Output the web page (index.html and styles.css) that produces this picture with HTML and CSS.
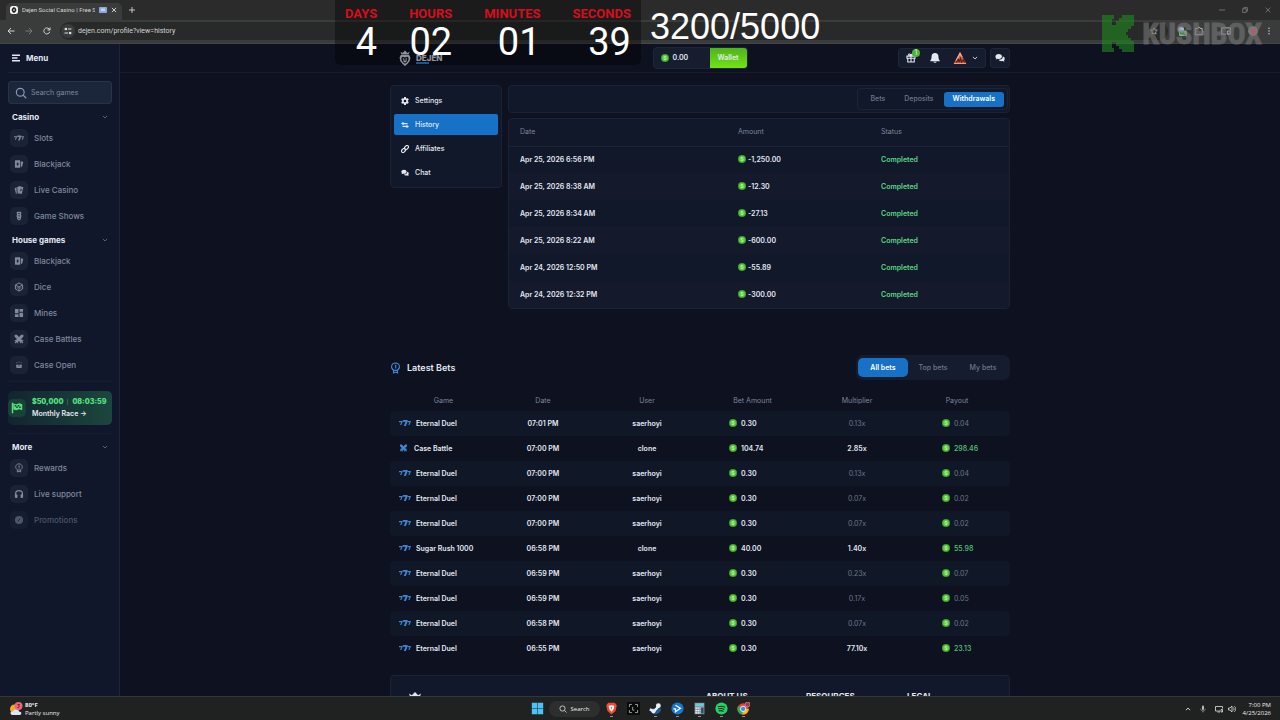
FILE: index.html
```html
<!DOCTYPE html>
<html lang="en">
<head>
<meta charset="utf-8">
<title>Dejen Social Casino</title>
<link rel="stylesheet" href="styles.css">
</head>
<body>
<svg class="sprite" aria-hidden="true">
  <symbol id="i-coin" viewBox="0 0 16 16"><circle cx="8" cy="8" r="8" fill="#3aa526"/><circle cx="8" cy="8" r="5.8" fill="#62cc45"/><path d="M10.400 5.600C9.400 4.600 6 4.500 6 6.400c0 2 4.300 1 4.300 3.100 0 2-3.600 1.900-4.700.8" fill="none" stroke="#e9ffe2" stroke-width="1.300"/></symbol>
  <symbol id="i-777" viewBox="0 0 24 16"><path fill="currentColor" d="M0 4h7v2.200L4.500 12H2.200L4.400 6.300H0zM17.500 4H24l-.6 2.200L21 12h-2.300l2.200-5.700h-3.400zM7.600 2h9.600v3L13.600 14h-4l3.500-8.600H7.600z"/></symbol>
  <symbol id="i-cards" viewBox="0 0 16 16"><path fill="currentColor" fill-rule="evenodd" d="M2.500 2H9a1 1 0 0 1 1 1v10a1 1 0 0 1-1 1H2.500a1 1 0 0 1-1-1V3a1 1 0 0 1 1-1zm3.300 3L4 8l1.800 3L7.600 8z"/><path fill="currentColor" d="M11 3.500l3 .8a1 1 0 0 1 .7 1.200L13 12l-2 .8z"/></symbol>
  <symbol id="i-live" viewBox="0 0 16 16"><path fill="currentColor" d="M1 5l3-1.400L4.500 14 3 13.500zM5 3l5-1.500v11L6 14z"/><path fill="currentColor" fill-rule="evenodd" d="M9.500 2l5.500 1.500-2.600 10.800L7 13zm1.700 3.600L9.600 8l1 2.400L12.600 8z"/></symbol>
  <symbol id="i-shows" viewBox="0 0 16 16"><path fill="currentColor" fill-rule="evenodd" d="M5 1h6l1 2-1 2 1 3-1 3v2l-3 2-3-2v-2L4 8l1-3-1-2zm1.500 2v1.500h3V3zm0 4v1.500h3V7zm0 4v1h3v-1z"/></symbol>
  <symbol id="i-dice" viewBox="0 0 16 16"><g fill="none" stroke="currentColor" stroke-width="1.600" stroke-linejoin="round"><path d="M8 1.500l5.700 3.200v6.600L8 14.500l-5.700-3.200V4.700zM2.300 4.700L8 8l5.700-3.300M8 8v6.500"/></g><circle cx="5" cy="9.500" r="1" fill="currentColor"/><circle cx="11" cy="9.500" r="1" fill="currentColor"/></symbol>
  <symbol id="i-mines" viewBox="0 0 16 16"><path fill="currentColor" d="M1.500 1.500h5.700v7H1.500zM8.800 1.500h5.700v4.500H8.800zM1.500 10h5.700v4.500H1.500zM8.800 7.500h5.700v7H8.800z"/></symbol>
  <symbol id="i-swords" viewBox="0 0 16 16"><path fill="currentColor" d="M1 1h3.500L8 4.700 11.500 1H15v3.500L11.300 8l2 2 1-1 1 1-2 2L15 13.500 13.500 15 12 13.300l-2 2-1-1 1-1-2-2-2 2 1 1-1 1-2-2L2.500 15 1 13.500 2.700 12l-2-2 1-1 1 1 2-2L1 4.500z"/></symbol>
  <symbol id="i-case" viewBox="0 0 16 16"><path fill="currentColor" d="M2 7.500h12l-1 6.500H3zM7.300 1h1.400v2.500H7.300zM3 2.500l2 1.500-.8 1-2-1.500zM13 2.500L11 4l.8 1 2-1.500z"/><path d="M6.500 10h3" stroke="#20283c" stroke-width="1.500"/></symbol>
  <symbol id="i-reward" viewBox="0 0 16 18"><g fill="none" stroke="currentColor" stroke-width="1.700"><path d="M5.500 12.500C.5 10 .8 2 8 1.500c7.200.5 7.500 8.500 2.500 11z"/><path d="M5 12.500v3.700l3-1.200 3 1.200v-3.700M7 5.800L8.300 5v4.800"/></g></symbol>
  <symbol id="i-headset" viewBox="0 0 16 16"><path d="M2.500 10V8a5.500 5.500 0 0 1 11 0v2" fill="none" stroke="currentColor" stroke-width="2"/><rect x="1.500" y="8.500" width="4" height="6" rx="1.300" fill="currentColor"/><rect x="10.500" y="8.500" width="4" height="6" rx="1.300" fill="currentColor"/></symbol>
  <symbol id="i-promo" viewBox="0 0 16 16"><circle cx="8" cy="8" r="6.500" fill="currentColor"/><path d="M6 10l4-4" stroke="#1a2236" stroke-width="1.200"/></symbol>
  <symbol id="i-chat" viewBox="0 0 16 16"><path fill="currentColor" d="M6 1.500c3 0 5.200 1.700 5.200 4S9 9.600 6 9.600c-.7 0-1.300 0-1.900-.3L1 10.500l1-2.300A3.700 3.700 0 0 1 .6 5.500c0-2.300 2.400-4 5.400-4z"/><path fill="currentColor" d="M12.600 5.600c1.800.6 3 1.900 3 3.500 0 1-.5 1.900-1.300 2.600l1 2.300-3.100-1.100c-3 .7-5.600-.3-6.600-2 3.800.3 7-1.800 7-5.300z"/></symbol>
  <symbol id="i-down" viewBox="0 0 10 10"><path d="M1.500 3.200L5 6.700l3.500-3.500" fill="none" stroke="currentColor" stroke-width="1.400"/></symbol>
  <symbol id="i-search" viewBox="0 0 16 16"><circle cx="7" cy="7" r="5.200" fill="none" stroke="currentColor" stroke-width="1.500"/><path d="M11 11l4 4" stroke="currentColor" stroke-width="1.500"/></symbol>
  <symbol id="i-lion" viewBox="0 0 20 26"><path fill="#dfe4f2" d="M4 7L2.500 2.500 6 4.500l4-4 4 4 3.500-2L16 7z"/><path fill="#dfe4f2" fill-rule="evenodd" d="M3 8h14l2 4-1 6-4 5-4 3-4-3-4-5-1-6zm3 3l-2 2 .5 4L7 20.500l3 2 3-2 2.500-3.500.5-4-2-2-4 1zm0 2.500l3 .5v3l1 .8 1-.8v-3l3-.5-1.500 2.500.5 2.500-3 2.500-3-2.500.5-2.500z"/></symbol>
</svg>

<div class="desktop">
  <header class="browser">
    <div class="tabs">
      <div class="tab">
        <svg class="favicon" viewBox="0 0 16 16"><rect width="16" height="16" rx="5" fill="#f4f4f4"/><path fill="#222" fill-rule="evenodd" d="M8 2l3 2 2 4-2 4-3 2-3-2-2-4 2-4zm-2 5v3h1V8h2v2h1V7z"/></svg>
        <span class="tab-title">Dejen Social Casino | Free S</span>
        <svg class="ic8" viewBox="0 0 16 12"><rect width="16" height="12" rx="1.500" fill="#8fa5dd"/><rect x="4" y="3" width="8" height="5" fill="#c6d2f4"/></svg>
        <button class="chrome-btn" aria-label="Close tab"><svg class="ic6" viewBox="0 0 10 10"><path d="M1.500 1.500l7 7m0-7l-7 7" stroke="currentColor" stroke-width="1.600"/></svg></button>
      </div>
      <button class="chrome-btn new-tab" aria-label="New tab"><svg class="ic6" viewBox="0 0 10 10"><path d="M5 0v10M0 5h10" stroke="currentColor" stroke-width="1.500"/></svg></button>
      <div class="window-btns">
        <button class="chrome-btn" aria-label="Minimize"><svg class="ic6" viewBox="0 0 10 10"><path d="M0 5h10" stroke="currentColor"/></svg></button>
        <button class="chrome-btn" aria-label="Restore"><svg class="ic6" viewBox="0 0 10 10"><path d="M1 3h6v6H1zM3 3V1h6v6H7" fill="none" stroke="currentColor"/></svg></button>
        <button class="chrome-btn" aria-label="Close"><svg class="ic6" viewBox="0 0 10 10"><path d="M1 1l8 8m0-8L1 9" stroke="currentColor"/></svg></button>
      </div>
    </div>
    <div class="toolbar">
      <div class="nav-btns">
        <button class="chrome-btn" aria-label="Back"><svg class="ic8" viewBox="0 0 16 16"><path d="M15 8H2m6-6L2 8l6 6" fill="none" stroke="currentColor" stroke-width="2"/></svg></button>
        <button class="chrome-btn dim" aria-label="Forward"><svg class="ic8" viewBox="0 0 16 16"><path d="M1 8h13M8 2l6 6-6 6" fill="none" stroke="currentColor" stroke-width="2"/></svg></button>
        <button class="chrome-btn" aria-label="Reload"><svg class="ic8" viewBox="0 0 16 16"><path d="M13.500 9.500A6 6 0 1 1 12 3.700L14 6M14 1v5H9" fill="none" stroke="currentColor" stroke-width="2"/></svg></button>
      </div>
      <div class="address">
        <span class="site-info"><svg class="ic8" viewBox="0 0 16 16"><path d="M1 4h5M8 4h7M1 12h7M10 12h5" stroke="#ddd" stroke-width="2"/><circle cx="4" cy="4" r="2.500" fill="#ddd"/><circle cx="12" cy="12" r="2.500" fill="#ddd"/></svg></span>
        <input class="url" aria-label="Address" value="dejen.com/profile?view=history">
        <svg class="ic8" viewBox="0 0 16 16"><path d="M8 1.500l2 4.400 4.700.5-3.500 3.200 1 4.700L8 12l-4.200 2.300 1-4.700L1.300 6.400 6 5.900z" fill="none" stroke="#bbb" stroke-width="1.500"/></svg>
      </div>
      <div class="extensions">
        <svg class="ic10" viewBox="0 0 20 20"><circle cx="8" cy="7" r="6" fill="#a9b9ef"/><circle cx="8" cy="6" r="3" fill="#fff"/><rect x="4" y="9" width="16" height="11" rx="3" fill="#6fd27d"/><path d="M7 17v-4l3 4v-4m3 0v4h4" fill="none" stroke="#20592b" stroke-width="1.500"/></svg>
        <svg class="ic10" viewBox="0 0 16 16"><path d="M2 4h4c0-3 4-3 4 0h3v4c2 0 2 3 0 3v3H2v-4c2 0 2-2.500 0-2.500z" fill="none" stroke="#bbb" stroke-width="1.500"/></svg>
        <svg class="ic10 gap" viewBox="0 0 16 16"><path d="M8 13H1V3h14v4" fill="none" stroke="#bbb" stroke-width="1.500"/><path d="M10 8h5v5h-5zM11 14l3-3" fill="none" stroke="#bbb" stroke-width="1.500"/></svg>
        <svg class="ic10 gap" viewBox="0 0 20 20"><circle cx="10" cy="10" r="8.500" fill="#e3476b" stroke="#46a08a" stroke-width="2.500"/></svg>
        <svg class="ic8" viewBox="0 0 16 16"><g fill="#ccc"><circle cx="8" cy="2.500" r="1.500"/><circle cx="8" cy="8" r="1.500"/><circle cx="8" cy="13.500" r="1.500"/></g></svg>
      </div>
    </div>
  </header>

  <div class="app">
    <aside class="sidebar">
      <button class="menu-btn"><svg class="burger" viewBox="0 0 16 16"><path d="M0 2.500h16M0 8h11M0 13.500h16" stroke="currentColor" stroke-width="2.600"/></svg>Menu</button>
      <label class="search"><svg class="ic12"><use href="#i-search"/></svg><input type="search" placeholder="Search games" aria-label="Search games"></label>
      <nav class="group">
        <button class="group-title">Casino<svg class="ic6"><use href="#i-down"/></svg></button>
        <a class="side-link" href="#"><span class="tile"><svg class="ic10"><use href="#i-777"/></svg></span>Slots</a>
        <a class="side-link" href="#"><span class="tile"><svg class="ic10"><use href="#i-cards"/></svg></span>Blackjack</a>
        <a class="side-link" href="#"><span class="tile"><svg class="ic10"><use href="#i-live"/></svg></span>Live Casino</a>
        <a class="side-link" href="#"><span class="tile"><svg class="ic10"><use href="#i-shows"/></svg></span>Game Shows</a>
      </nav>
      <nav class="group">
        <button class="group-title">House games<svg class="ic6"><use href="#i-down"/></svg></button>
        <a class="side-link" href="#"><span class="tile"><svg class="ic10"><use href="#i-cards"/></svg></span>Blackjack</a>
        <a class="side-link" href="#"><span class="tile"><svg class="ic10"><use href="#i-dice"/></svg></span>Dice</a>
        <a class="side-link" href="#"><span class="tile"><svg class="ic10"><use href="#i-mines"/></svg></span>Mines</a>
        <a class="side-link" href="#"><span class="tile"><svg class="ic10"><use href="#i-swords"/></svg></span>Case Battles</a>
        <a class="side-link" href="#"><span class="tile"><svg class="ic8"><use href="#i-case"/></svg></span>Case Open</a>
      </nav>
      <div class="race-wrap">
        <a class="race" href="#">
          <span class="tile flag"><svg class="ic12" viewBox="0 0 16 16"><path d="M2 1v14" stroke="#4fe07a" stroke-width="2"/><path fill="#4fe07a" fill-rule="evenodd" d="M3 2l4 1 4-1.500L15 3v8l-4-1.500L7 11l-4-1zm2 2v2h2V4zm4 0v2h2V4zM7 6v2h2V6zm4 0v2h2V6z"/></svg></span>
          <span class="race-text"><span class="race-top"><b>$50,000</b><i></i><b>08:03:59</b></span><span>Monthly Race →</span></span>
        </a>
      </div>
      <nav class="group">
        <button class="group-title">More<svg class="ic6"><use href="#i-down"/></svg></button>
        <a class="side-link" href="#"><span class="tile"><svg class="ic10"><use href="#i-reward"/></svg></span>Rewards</a>
        <a class="side-link" href="#"><span class="tile"><svg class="ic10"><use href="#i-headset"/></svg></span>Live support</a>
        <a class="side-link faded" href="#"><span class="tile"><svg class="ic10"><use href="#i-promo"/></svg></span>Promotions</a>
      </nav>
    </aside>

    <main class="main">
      <div class="topbar">
        <div class="container topbar-grid">
          <a class="logo" href="#"><svg class="lion"><use href="#i-lion"/></svg><span class="logo-name">DEJEN</span></a>
          <div class="wallet"><span class="balance"><svg class="ic8"><use href="#i-coin"/></svg>0.00</span><button class="wallet-btn">Wallet</button></div>
          <div class="actions">
            <div class="action-box">
              <button class="icon-btn" aria-label="Gifts"><svg class="ic10" viewBox="0 0 16 16"><path d="M1.500 5h13v3.500h-13zM2.800 8.500v6h10.400v-6M8 5v9.500M8 5C3 5 3.500 1 6 1.500 7.500 2 8 5 8 5s.5-3 2-3.500C12.500 1 13 5 8 5" fill="none" stroke="currentColor" stroke-width="1.700"/></svg><span class="badge">1</span></button>
              <button class="icon-btn" aria-label="Notifications"><svg class="bell" viewBox="0 0 16 18"><path fill="currentColor" d="M8 1c3.500 0 5.500 2.500 5.500 5.500 0 3 .5 4.500 2 6.500v1H.5v-1c1.500-2 2-3.500 2-6.500C2.500 3.500 4.500 1 8 1zM5.500 15h5c-.3 2-4.700 2-5 0z"/></svg></button>
              <button class="icon-btn" aria-label="Account"><svg class="avatar" viewBox="0 0 28 26"><path d="M14 0l14 26H0z" fill="#d9583a"/><path d="M14 0l6 11-4-1-2-4-6 12-4 1z" fill="#f3b08c"/><path d="M6 23l4-7 2 5 3-7 2 8 4-5 3 6" fill="none" stroke="#4b1d20" stroke-width="2.500"/><path d="M1 25h26" stroke="#f2c3a5" stroke-width="1.500"/></svg><svg class="ic6"><use href="#i-down"/></svg></button>
            </div>
            <button class="chat-btn" aria-label="Open chat"><svg class="ic10"><use href="#i-chat"/></svg></button>
          </div>
        </div>
      </div>

      <div class="container content">
        <section class="profile">
          <nav class="card profile-nav">
            <a href="#"><svg class="ic8" viewBox="0 0 16 16"><path fill="currentColor" fill-rule="evenodd" d="M6.300 0h3.400l.5 2.300 1.400.8 2.300-.8 1.700 3-1.700 1.600v2.200l1.700 1.600-1.700 3-2.300-.8-1.400.8-.5 2.300H6.300l-.5-2.300-1.400-.8-2.300.8-1.700-3 1.700-1.600V6.900L.4 5.300l1.700-3 2.300.8 1.400-.8zM8 5.300a2.700 2.700 0 1 0 0 5.400 2.700 2.700 0 0 0 0-5.400z"/></svg>Settings</a>
            <a class="active" href="#"><svg class="ic8" viewBox="0 0 16 16"><path fill="currentColor" d="M5 1.500V4h8v2.400H5V8.500L0 5zM11 14.500V12H3V9.600h8V7.500l5 3.500z"/></svg>History</a>
            <a href="#"><svg class="ic8" viewBox="0 0 16 16"><g fill="none" stroke="currentColor" stroke-width="2.300"><rect x="6.500" y="2" width="9" height="6" rx="3" transform="rotate(-45 11 5)"/><rect x=".5" y="8" width="9" height="6" rx="3" transform="rotate(-45 5 11)"/></g></svg>Affiliates</a>
            <a href="#"><svg class="ic8"><use href="#i-chat"/></svg>Chat</a>
          </nav>
          <div class="profile-main">
            <div class="card filter-bar">
              <div class="segmented"><button>Bets</button><button>Deposits</button><button class="active">Withdrawals</button></div>
            </div>
            <div class="card">
              <table class="history">
                <colgroup><col class="h-date"><col class="h-amount"><col></colgroup>
                <thead><tr><th>Date</th><th>Amount</th><th>Status</th></tr></thead>
                <tbody>
                  <tr><td>Apr 25, 2026 6:56 PM</td><td><svg class="coin"><use href="#i-coin"/></svg>-1,250.00</td><td>Completed</td></tr>
                  <tr><td>Apr 25, 2026 8:38 AM</td><td><svg class="coin"><use href="#i-coin"/></svg>-12.30</td><td>Completed</td></tr>
                  <tr><td>Apr 25, 2026 8:34 AM</td><td><svg class="coin"><use href="#i-coin"/></svg>-27.13</td><td>Completed</td></tr>
                  <tr><td>Apr 25, 2026 8:22 AM</td><td><svg class="coin"><use href="#i-coin"/></svg>-600.00</td><td>Completed</td></tr>
                  <tr><td>Apr 24, 2026 12:50 PM</td><td><svg class="coin"><use href="#i-coin"/></svg>-55.89</td><td>Completed</td></tr>
                  <tr><td>Apr 24, 2026 12:32 PM</td><td><svg class="coin"><use href="#i-coin"/></svg>-300.00</td><td>Completed</td></tr>
                </tbody>
              </table>
            </div>
          </div>
        </section>

        <section class="bets">
          <div class="bets-head">
            <h2><svg class="medal"><use href="#i-reward"/></svg>Latest Bets</h2>
            <div class="segmented large"><button class="active">All bets</button><button>Top bets</button><button>My bets</button></div>
          </div>
          <table class="bet-table">
            <colgroup><col class="b-game"><col class="b-date"><col class="b-user"><col class="b-bet"><col class="b-mult"><col></colgroup>
            <thead><tr><th>Game</th><th>Date</th><th>User</th><th>Bet Amount</th><th>Multiplier</th><th>Payout</th></tr></thead>
            <tbody>
              <tr><td><svg class="slot"><use href="#i-777"/></svg>Eternal Duel</td><td>07:01 PM</td><td>saerhoyi</td><td><svg class="coin"><use href="#i-coin"/></svg>0.30</td><td>0.13x</td><td><svg class="coin"><use href="#i-coin"/></svg>0.04</td></tr>
              <tr class="win"><td><svg class="battle"><use href="#i-swords"/></svg>Case Battle</td><td>07:00 PM</td><td>clone</td><td><svg class="coin"><use href="#i-coin"/></svg>104.74</td><td>2.85x</td><td><svg class="coin"><use href="#i-coin"/></svg>298.46</td></tr>
              <tr><td><svg class="slot"><use href="#i-777"/></svg>Eternal Duel</td><td>07:00 PM</td><td>saerhoyi</td><td><svg class="coin"><use href="#i-coin"/></svg>0.30</td><td>0.13x</td><td><svg class="coin"><use href="#i-coin"/></svg>0.04</td></tr>
              <tr><td><svg class="slot"><use href="#i-777"/></svg>Eternal Duel</td><td>07:00 PM</td><td>saerhoyi</td><td><svg class="coin"><use href="#i-coin"/></svg>0.30</td><td>0.07x</td><td><svg class="coin"><use href="#i-coin"/></svg>0.02</td></tr>
              <tr><td><svg class="slot"><use href="#i-777"/></svg>Eternal Duel</td><td>07:00 PM</td><td>saerhoyi</td><td><svg class="coin"><use href="#i-coin"/></svg>0.30</td><td>0.07x</td><td><svg class="coin"><use href="#i-coin"/></svg>0.02</td></tr>
              <tr class="win"><td><svg class="slot"><use href="#i-777"/></svg>Sugar Rush 1000</td><td>06:58 PM</td><td>clone</td><td><svg class="coin"><use href="#i-coin"/></svg>40.00</td><td>1.40x</td><td><svg class="coin"><use href="#i-coin"/></svg>55.98</td></tr>
              <tr><td><svg class="slot"><use href="#i-777"/></svg>Eternal Duel</td><td>06:59 PM</td><td>saerhoyi</td><td><svg class="coin"><use href="#i-coin"/></svg>0.30</td><td>0.23x</td><td><svg class="coin"><use href="#i-coin"/></svg>0.07</td></tr>
              <tr><td><svg class="slot"><use href="#i-777"/></svg>Eternal Duel</td><td>06:59 PM</td><td>saerhoyi</td><td><svg class="coin"><use href="#i-coin"/></svg>0.30</td><td>0.17x</td><td><svg class="coin"><use href="#i-coin"/></svg>0.05</td></tr>
              <tr><td><svg class="slot"><use href="#i-777"/></svg>Eternal Duel</td><td>06:58 PM</td><td>saerhoyi</td><td><svg class="coin"><use href="#i-coin"/></svg>0.30</td><td>0.07x</td><td><svg class="coin"><use href="#i-coin"/></svg>0.02</td></tr>
              <tr class="win"><td><svg class="slot"><use href="#i-777"/></svg>Eternal Duel</td><td>06:55 PM</td><td>saerhoyi</td><td><svg class="coin"><use href="#i-coin"/></svg>0.30</td><td>77.10x</td><td><svg class="coin"><use href="#i-coin"/></svg>23.13</td></tr>
            </tbody>
          </table>
        </section>

        <footer class="card site-footer">
          <svg class="footer-lion"><use href="#i-lion"/></svg>
          <span>ABOUT US</span><span>RESOURCES</span><span>LEGAL</span>
        </footer>
      </div>
    </main>
  </div>

  <footer class="taskbar">
    <div class="weather">
      <svg class="sun" viewBox="0 0 28 28"><circle cx="11" cy="14" r="9" fill="#f5a62b"/><path d="M7 26c-6-1-5-8 1-7 2-6 11-5 12 0 6 0 6 7 1 7z" fill="#d8e8fb"/><circle cx="19" cy="8" r="8" fill="#ee6478"/><path d="M17 5h4l-2 3c3 0 2 4-2 3" fill="none" stroke="#5d1522" stroke-width="1.500"/></svg>
      <div><b>80°F</b><span>Partly sunny</span></div>
    </div>
    <div class="dock">
      <svg class="dock-icon" viewBox="0 0 16 16"><path fill="#4cc3f5" d="M1 1h6.700v6.700H1zM8.300 1H15v6.700H8.300zM1 8.300h6.700V15H1zM8.300 8.300H15V15H8.300z"/></svg>
      <button class="task-search"><svg class="ic8"><use href="#i-search"/></svg>Search</button>
      <svg class="dock-icon running" viewBox="0 0 16 16"><path fill="#f04a32" d="M4 1h8l2.500 3-1.500 7-5 4.500L3 11 1.500 4z"/><path fill="#fff" d="M4.500 4.500L8 4l3.500.5-.8 4L8 12 5.300 8.500z"/><path fill="#f04a32" d="M7 6h2l-1 3.500z"/></svg>
      <svg class="dock-icon" viewBox="0 0 16 16"><rect width="16" height="16" fill="#0a0a0a"/><path d="M3 6V3h3M10 3h3v3M13 10v3h-3M6 13H3v-3M7 6v4h2" fill="none" stroke="#bbb"/></svg>
      <svg class="dock-icon running" viewBox="0 0 16 16"><path d="M1 8a7 7 0 0 0 14 0z" fill="#1c5b93"/><path d="M1 9l5 2.500L12 5" fill="none" stroke="#e8eef5" stroke-width="3"/><circle cx="11.500" cy="4.500" r="3" fill="#e8eef5"/><circle cx="5.500" cy="11.500" r="2.500" fill="#e8eef5"/></svg>
      <svg class="dock-icon running" viewBox="0 0 16 16"><circle cx="8" cy="8" r="7.500" fill="#1777d2"/><path d="M5.500 4l6 3.700-6 4.300V8.500H3" fill="none" stroke="#fff" stroke-width="1.600"/></svg>
      <svg class="dock-icon running" viewBox="0 0 16 16"><rect x="2" y="1" width="12" height="14" fill="#8c9ba8"/><rect x="3" y="2" width="10" height="3" fill="#62d0dc"/><path d="M3 7.500h6M3 10.500h6M3 13.500h6" stroke="#eee" stroke-width="1.500" stroke-dasharray="2 .7"/><rect x="10" y="7" width="3" height="7" fill="#24506b"/></svg>
      <svg class="dock-icon running" viewBox="0 0 16 16"><circle cx="8" cy="8" r="7.500" fill="#25d366"/><path d="M3.500 5.800c3-1 6.500-.7 9 .8M4 8.400c2.600-.8 5.300-.5 7.500.8M4.500 11c2-.6 4.200-.4 6 .6" fill="none" stroke="#10321c" stroke-width="1.300"/></svg>
      <svg class="dock-icon running" viewBox="0 0 16 16"><circle cx="7.500" cy="8.500" r="7" fill="#e94335"/><path d="M1.400 5l6.100 3.500L6.500 15.400A7 7 0 0 1 1.400 5z" fill="#34a853"/><path d="M7.500 8.500h7a7 7 0 0 1-8 6.900z" fill="#fbbc05"/><circle cx="7.500" cy="8.500" r="3.300" fill="#4285f4" stroke="#fff"/><circle cx="13" cy="3" r="3" fill="#d02245" stroke="#72b8a8"/></svg>
    </div>
    <div class="tray">
      <svg class="ic6" viewBox="0 0 10 10"><path d="M1.500 7L5 3.500 8.500 7" fill="none" stroke="currentColor" stroke-width="1.500"/></svg>
      <svg class="ic8 gap" viewBox="0 0 16 16"><rect x="6" y="1" width="4" height="9" rx="2" fill="#bbb"/><path d="M3.500 7.500c0 6 9 6 9 0M8 12v3" fill="none" stroke="#bbb" stroke-width="1.200"/></svg>
      <svg class="ic8 gap" viewBox="0 0 16 16"><path d="M10 12H1V3h14v4M5 14h5M12 9v5h3V9z" fill="none" stroke="currentColor" stroke-width="1.500"/></svg>
      <svg class="ic8" viewBox="0 0 16 16"><path d="M1 6h3l4-4v12l-4-4H1zM10.500 5c2 1.500 2 4.500 0 6M12.500 2.500c4 3 4 8 0 11" fill="none" stroke="currentColor" stroke-width="1.500"/></svg>
      <div class="clock"><span>7:00 PM</span><span>4/25/2026</span></div>
    </div>
  </footer>

  <div class="countdown">
    <div><span>DAYS</span><strong>4</strong></div>
    <div><span>HOURS</span><strong>02</strong></div>
    <div><span>MINUTES</span><strong>01</strong></div>
    <div><span>SECONDS</span><strong>39</strong></div>
  </div>
  <div class="goal">3200/5000</div>
  <div class="watermark">
    <svg viewBox="0 0 32 37"><path fill="#1f8a1f" d="M0 0h12v4h-2v6h4V6h3V3h3V0h12v11h-3v3h-3v3h-2v3h2v3h3v3h3v11H20v-3h-3v-3h-3v-4h-4v6h2v4H0z"/></svg>
    <span>KUSHBOX</span>
  </div>
</div>
</body>
</html>
```
FILE: styles.css
```css
* { box-sizing: border-box; }

body {
  margin: 0;
  font-family: Inter, "Open Sans", sans-serif;
  font-size: 7px;
  line-height: 10px;
  color: #e4e8f3;
  background: #0d1120;
}

button, input { font: inherit; color: inherit; border: 0; background: none; padding: 0; margin: 0; }
button { display: flex; align-items: center; justify-content: center; }
a { color: inherit; text-decoration: none; }
svg { flex: none; display: block; }

.sprite { position: absolute; width: 0; height: 0; }
.ic6 { width: 6px; height: 6px; }
.ic8 { width: 8px; height: 8px; }
.ic10 { width: 10px; height: 10px; }
.ic12 { width: 12px; height: 12px; }

.desktop { position: relative; display: flex; flex-direction: column; height: 100vh; overflow: hidden; }

/* Browser window */
.browser { background: #3a3b3b; color: #d4d4d4; font-family: Roboto, sans-serif; }
.tabs { display: flex; align-items: center; height: 20px; padding-left: 6px; background: #2b2b2b; }
.tab { display: flex; align-items: center; gap: 4px; align-self: flex-end; width: 116px; height: 17px; padding: 0 5px 3px 4px; border-radius: 5px 5px 0 0; background: #3a3b3b; }
.favicon { width: 8px; height: 8px; }
.tab-title { flex: 1; overflow: hidden; white-space: nowrap; font-size: 6px; }
.new-tab { margin-left: 7px; }
.chrome-btn.dim { color: #777; }
.window-btns { display: flex; gap: 17px; margin-left: auto; padding-right: 9px; color: #999; }
.toolbar { display: flex; align-items: center; height: 24px; padding: 0 7px 1px; gap: 9px; border-bottom: 1px solid #454646; }
.nav-btns { display: flex; gap: 10px; }
.address { flex: 1; display: flex; align-items: center; gap: 3px; height: 18px; padding: 0 10px 0 1px; border-radius: 9px; background: #282929; }
.site-info { display: grid; place-items: center; width: 14px; height: 14px; border-radius: 50%; background: #3a3b3b; }
.url { flex: 1; min-width: 0; font-size: 7px; }
.extensions { display: flex; align-items: center; gap: 7px; }
.extensions .gap { margin-left: 10px; }

/* App */
.app { flex: 1; display: flex; min-height: 0; }
.sidebar { width: 120px; flex: none; padding: 0 7px 0 8px; overflow: hidden; border-right: 1px solid #1c2436; background: #10172a; }
.menu-btn { justify-content: flex-start; width: 100%; height: 29px; padding-left: 4px; gap: 6px; margin-bottom: 8px; font-size: 8px; font-weight: 700; border-bottom: 1px solid #1a2235; }
.burger { width: 8px; height: 8px; }
.search { display: flex; align-items: center; gap: 4px; height: 23px; margin-bottom: 5px; padding: 0 6px; border: 1px solid #263349; border-radius: 3px; color: #8b9bb3; background: #1b263a; }
.search input { width: 100%; min-width: 0; outline: 0; }
.search input::placeholder { color: #7d899e; opacity: 1; }
.group { margin-bottom: 3px; }
.group-title { justify-content: space-between; width: 100%; height: 16px; padding: 0 4px; font-size: 8px; font-weight: 700; }
.group-title svg { color: #66718a; }
.side-link { display: flex; align-items: center; gap: 6px; height: 26px; padding-left: 2px; font-size: 8px; font-weight: 500; color: #7f889d; }
.tile { display: grid; place-items: center; width: 18px; height: 18px; border-radius: 5px; background: #1a2236; }
.side-link.faded { opacity: .55; }
.race-wrap { margin: 0 0 5px; padding: 9px 0 8px; border: 1px solid #151d30; border-width: 1px 0; }
.race { display: flex; align-items: center; gap: 6px; height: 34px; border-radius: 5px; background: linear-gradient(90deg, #122530, #1c463d); }
.flag { background: #1b4038; }
.race-text { display: grid; gap: 2px; font-weight: 600; white-space: nowrap; }
.race-top { display: flex; align-items: center; gap: 4px; color: #52e07f; }
.race-top i { width: 1px; height: 6px; background: #35604e; }

.main { flex: 1; min-width: 0; overflow: hidden; }
.container { width: 100%; max-width: 620px; margin: 0 auto; }
.topbar { height: 29px; border-bottom: 1px solid #171d2f; background: #0d1120; }
.topbar-grid { display: grid; grid-template-columns: 1fr auto 1fr; align-items: center; height: 28px; }
.logo { display: flex; align-items: center; gap: 5px; padding-left: 9px; }
.lion { width: 12px; height: 16px; }
.logo-name { padding-bottom: 1px; font-size: 8px; font-weight: 800; background: linear-gradient(#2a86dc, #2a86dc) left bottom / 13px 2px no-repeat; }
.wallet { display: flex; height: 22px; border-radius: 4px; overflow: hidden; background: #161d2f; border: 1px solid #1e2638; font-weight: 600; }
.balance { display: flex; align-items: center; gap: 4px; width: 56px; padding-left: 7px; }
.wallet-btn { width: 37px; background: linear-gradient(#4eb31c, #72e316); }
.actions { display: flex; justify-content: flex-end; gap: 4px; }
.action-box { display: flex; align-items: center; justify-content: space-between; width: 88px; height: 20px; padding: 0 7px; border: 1px solid #1e2638; border-radius: 3px; background: #151c2d; }
.icon-btn { position: relative; gap: 5px; }
.bell { width: 10px; height: 12px; }
.badge { position: absolute; top: -4px; right: -4px; width: 8px; height: 8px; border-radius: 50%; line-height: 8px; background: #48b82c; }
.avatar { width: 14px; height: 12px; }
.chat-btn { width: 20px; height: 20px; border: 1px solid #1e2638; border-radius: 3px; background: #151c2d; }

.content { padding-top: 12px; }
.card { border: 1px solid #1a2233; border-radius: 4px; background: #111829; }
.profile { display: flex; align-items: flex-start; gap: 6px; }
.profile-nav { display: grid; gap: 3px; width: 112px; padding: 4px 3px; }
.profile-nav a { display: flex; align-items: center; gap: 6px; height: 21px; padding-left: 7px; border-radius: 2px; font-weight: 500; }
.profile-nav .active { background: #1771c7; }
.profile-main { flex: 1; display: grid; gap: 5px; }
.filter-bar { display: flex; justify-content: flex-end; padding: 2px 1px; }
.segmented { display: flex; align-items: center; gap: 1px; height: 22px; padding: 3px; border: 1px solid #1c2538; border-radius: 4px; color: #6d778c; font-weight: 500; }
.segmented button { height: 15px; padding: 0 9px; border-radius: 3px; }
.segmented .active { color: #fff; font-weight: 600; background: #1771c7; }
.segmented.large { gap: 0; height: 25px; padding: 2px; border: 0; border-radius: 7px; background: #151c2e; }
.segmented.large button { width: 50px; height: 19px; padding: 0; border-radius: 5px; }

table { width: 100%; table-layout: fixed; border-collapse: collapse; }
th, td { padding: 0; white-space: nowrap; }
th { font-weight: 400; color: #7e879b; }
td { font-weight: 600; }
td svg { display: inline-block; vertical-align: middle; margin-bottom: 1px; }
.coin { width: 8px; height: 8px; margin-right: 2px; }

.history .h-date { width: 218px; }
.history .h-amount { width: 143px; }
.history th, .history td { height: 27px; padding-left: 11px; text-align: left; }
.history th { border-bottom: 1px solid #1c2538; }
.history tbody tr:nth-child(even) { background: #141a2c; }
.history td:last-child { color: #5bd982; }

.bets { padding-top: 46px; }
.bets-head { display: flex; align-items: center; justify-content: space-between; margin-bottom: 10px; }
.bets h2 { display: flex; align-items: center; gap: 6px; margin: 0; font-size: 9px; font-weight: 600; }
.medal { width: 11px; height: 12px; color: #3e86d3; }
.b-game { width: 107px; }
.b-date { width: 92px; }
.b-user { width: 116px; }
.b-bet { width: 95px; }
.b-mult { width: 114px; }
.bet-table th { height: 21px; }
.bet-table td { height: 25px; text-align: center; }
.bet-table tbody tr:nth-child(odd) td { background: #101828; }
.bet-table td:first-child { padding-left: 9px; text-align: left; border-radius: 4px 0 0 4px; }
.bet-table td:nth-child(4) { padding-left: 24px; text-align: left; }
.bet-table td:nth-child(5), .bet-table td:last-child { color: #6d7587; font-weight: 400; }
.bet-table th:last-child { padding-right: 10px; }
.bet-table td:last-child { padding-left: 28px; text-align: left; border-radius: 0 4px 4px 0; }
.bet-table .win td:nth-child(5) { color: #e4e8f3; font-weight: 600; }
.bet-table .win td:last-child { color: #52c477; font-weight: 500; }
.bet-table .coin { margin-right: 4px; }
.slot { width: 12px; height: 8px; margin-right: 5px; color: #3e86d3; }
.battle { width: 9px; height: 8px; margin-right: 6px; color: #3e86d3; }

.site-footer { display: grid; grid-template-columns: 1fr 100px 101px 102px; align-items: start; margin-top: 14px; padding: 15px 0 40px 16px; font-size: 8px; font-weight: 700; }
.footer-lion { width: 16px; height: 22px; }

/* Desktop taskbar */
.taskbar { display: grid; grid-template-columns: 1fr auto 1fr; align-items: center; height: 24px; flex: none; padding: 0 9px; border-top: 1px solid #353637; background: #202121; font-family: "Open Sans", sans-serif; font-size: 6px; color: #eee; line-height: 8px; }
.weather { display: flex; align-items: center; gap: 2px; }
.sun { width: 14px; height: 14px; }
.weather b, .weather span, .clock span { display: block; }
.dock { display: flex; align-items: center; gap: 9px; }
.dock-icon { width: 13px; height: 13px; }
.running { height: 17px; padding: 2px 0; background: linear-gradient(#8b8f92, #8b8f92) center bottom / 3px 1px no-repeat; }
.task-search { gap: 4px; width: 51px; height: 16px; margin: 0 -4px; border-radius: 8px; background: #2d2e2e; }
.tray { display: flex; align-items: center; justify-content: flex-end; gap: 5px; }
.tray .gap { margin-left: 3px; }
.clock { margin-left: 2px; text-align: right; }

/* Stream overlays */
.countdown { position: absolute; top: 0; left: 335px; display: flex; gap: 32px; padding: 6px 10px 0; height: 65px; border-radius: 0 0 6px 6px; background: rgba(0, 0, 0, .36); font-family: Roboto, sans-serif; text-align: right; }
.countdown span { display: block; font-size: 13px; line-height: 16px; font-weight: 700; color: #d40f1b; }
.countdown strong { display: block; font-size: 38px; line-height: 40px; font-weight: 400; color: #fff; }
.goal { position: absolute; top: 7px; left: 650px; font-family: "Liberation Sans", sans-serif; font-size: 36px; line-height: 40px; color: #fff; }
.watermark { position: absolute; top: 15px; right: 18px; display: flex; align-items: center; gap: 8px; opacity: .6; font-family: "Liberation Sans Narrow", "Roboto Condensed", "Open Sans Condensed", "Liberation Sans", sans-serif; font-size: 30px; line-height: 37px; font-weight: 700; color: #777; -webkit-text-stroke: 1px #777; }
.watermark svg { width: 32px; height: 37px; }
```
